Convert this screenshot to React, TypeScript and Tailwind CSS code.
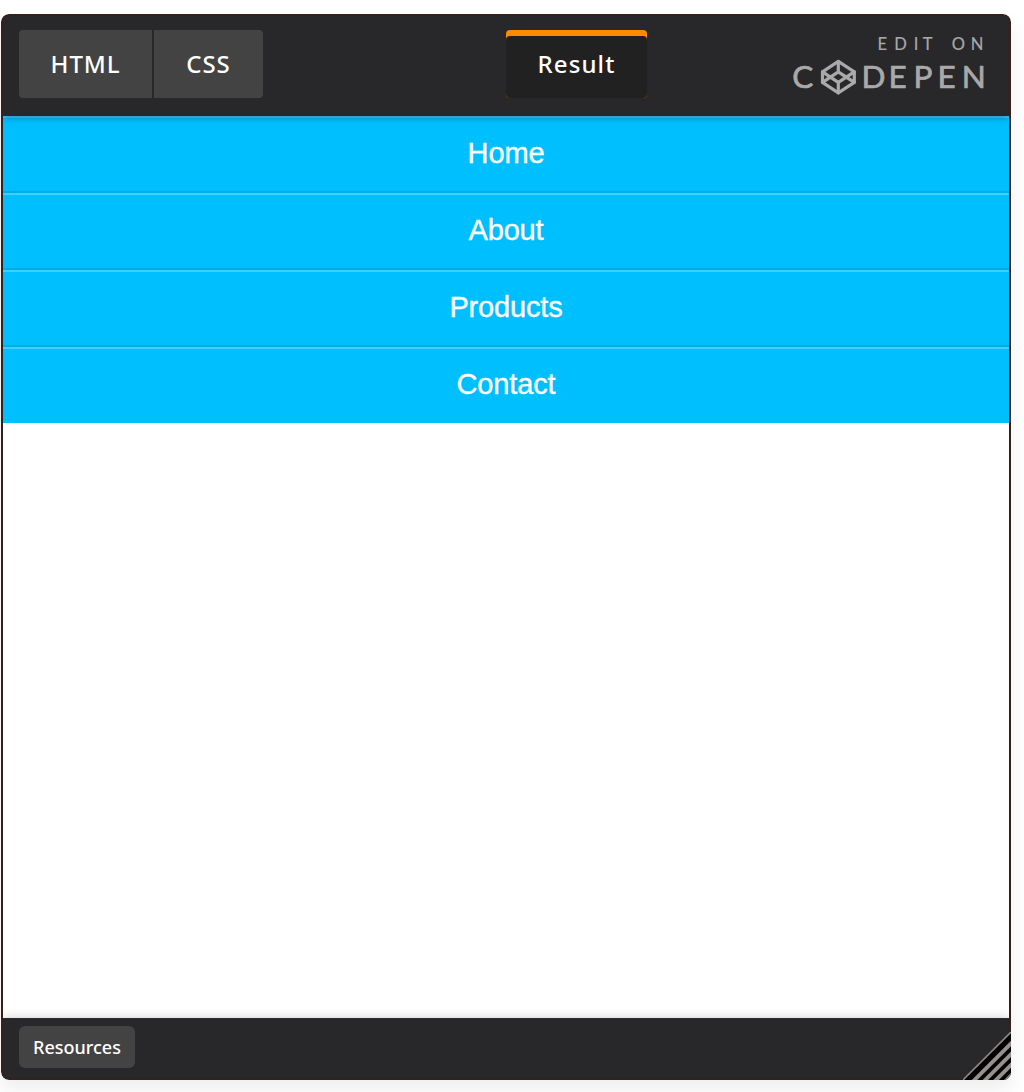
import React from "react";

const links = ["Home", "About", "Products", "Contact"];

function CodePenLogo() {
  return (
    <svg width="200" height="66" viewBox="790 30 200 66" role="img" aria-label="Edit on CodePen">
      <g fill="#a9a9a9" stroke="#a9a9a9" fontFamily="Lato, sans-serif" strokeLinejoin="round">
        <text x="877.5 894.2 913.8 922.7 951.8 970.8" y="50" fontSize="16.5" strokeWidth="0.2">
          EDITON
        </text>
        <text x="792.2" y="88.2" fontSize="31.5" strokeWidth="0.7">C</text>
        <text x="861.6 888.6 913.6 937.6 961.7" y="88.2" fontSize="31.5" strokeWidth="0.7">
          DEPEN
        </text>
      </g>
      <g fill="none" stroke="#a9a9a9" strokeWidth="3.2" strokeLinejoin="round" strokeLinecap="round">
        <path d="M838.3 61.4 L854.3 71.8 V82.4 L838.3 92.8 L822.5 82.4 V71.8 Z" />
        <path d="M838.3 61.4 V71.6 M838.3 82.6 V92.8 M822.5 71.8 L838.3 82.4 L854.3 71.8 M822.5 82.4 L838.3 71.8 L854.3 82.4" />
      </g>
    </svg>
  );
}

export default function App() {
  return (
    <div className="h-[1092px] w-[1024px] overflow-hidden bg-white pt-[14px] pl-px">
      <div className="relative h-[1066px] w-[1010px] overflow-hidden rounded-[8px] shadow-[0_10px_20px_rgba(0,0,0,0.07)]">
        <div className="flex h-full w-full flex-col overflow-hidden rounded-[8px] border-2 border-[#35201c] bg-[#28282a] font-['Noto_Sans',sans-serif]">
          <header className="relative z-10 flex h-[100px] shrink-0 items-start justify-between pr-[19px] pl-[16px] pt-[14px] shadow-[0_1px_7px_rgba(0,0,0,0.4)]">
            <div className="flex w-[487px] gap-[2px] text-[24px] font-medium leading-[68px] tracking-[0.9px] text-white">
              <button className="h-[68px] w-[133px] rounded-l-[4px] bg-[#434343]">HTML</button>
              <button className="h-[68px] w-[109px] rounded-r-[4px] bg-[#434343]">CSS</button>
            </div>
            <button className="h-[68px] w-[141px] overflow-hidden rounded-[4px] bg-[#ff8a00] pt-[6px] text-[24px] font-medium tracking-[1.1px] text-white">
              <span className="block h-[62px] rounded-t-[4px] bg-[#212121] leading-[56px]">Result</span>
            </button>
            <div className="flex flex-1 justify-end">
              <CodePenLogo />
            </div>
          </header>
          <main className="flex-1 bg-white">
            <nav className="font-['Liberation_Sans',sans-serif] text-[29px] tracking-[-0.15px] text-white [-webkit-text-stroke:0.35px_white]">
              {links.map((label) => (
                <a
                  key={label}
                  className="block h-[77px] border-t-2 border-b-2 border-t-[#40cfff] border-b-[#00ace6] bg-[#00bfff] text-center leading-[71px] last:h-[76px] last:border-b-0"
                >
                  {label}
                </a>
              ))}
            </nav>
          </main>
          <footer className="h-[60px] shrink-0 bg-[#28282a] px-[16px] pt-[8px] shadow-[0_0_10px_rgba(0,0,0,0.2)]">
            <button className="h-[42px] w-[116px] rounded-[6px] bg-[#434343] text-[18px] font-medium leading-[42px] text-white">
              Resources
            </button>
          </footer>
        </div>
        <svg className="absolute right-0 bottom-0" width="48" height="48" viewBox="0 0 48 48">
          <path d="M0 48 L48 0 V48 Z" fill="#000" />
          <path d="M0 48 L48 0" stroke="#8d8686" strokeWidth="1.6" />
          <path
            d="M9.5 50 L50 9.5 M20.3 50 L50 20.3 M31 50 L50 31 M41.7 50 L50 41.7"
            stroke="#989090"
            strokeWidth="3.9"
          />
        </svg>
      </div>
    </div>
  );
}
